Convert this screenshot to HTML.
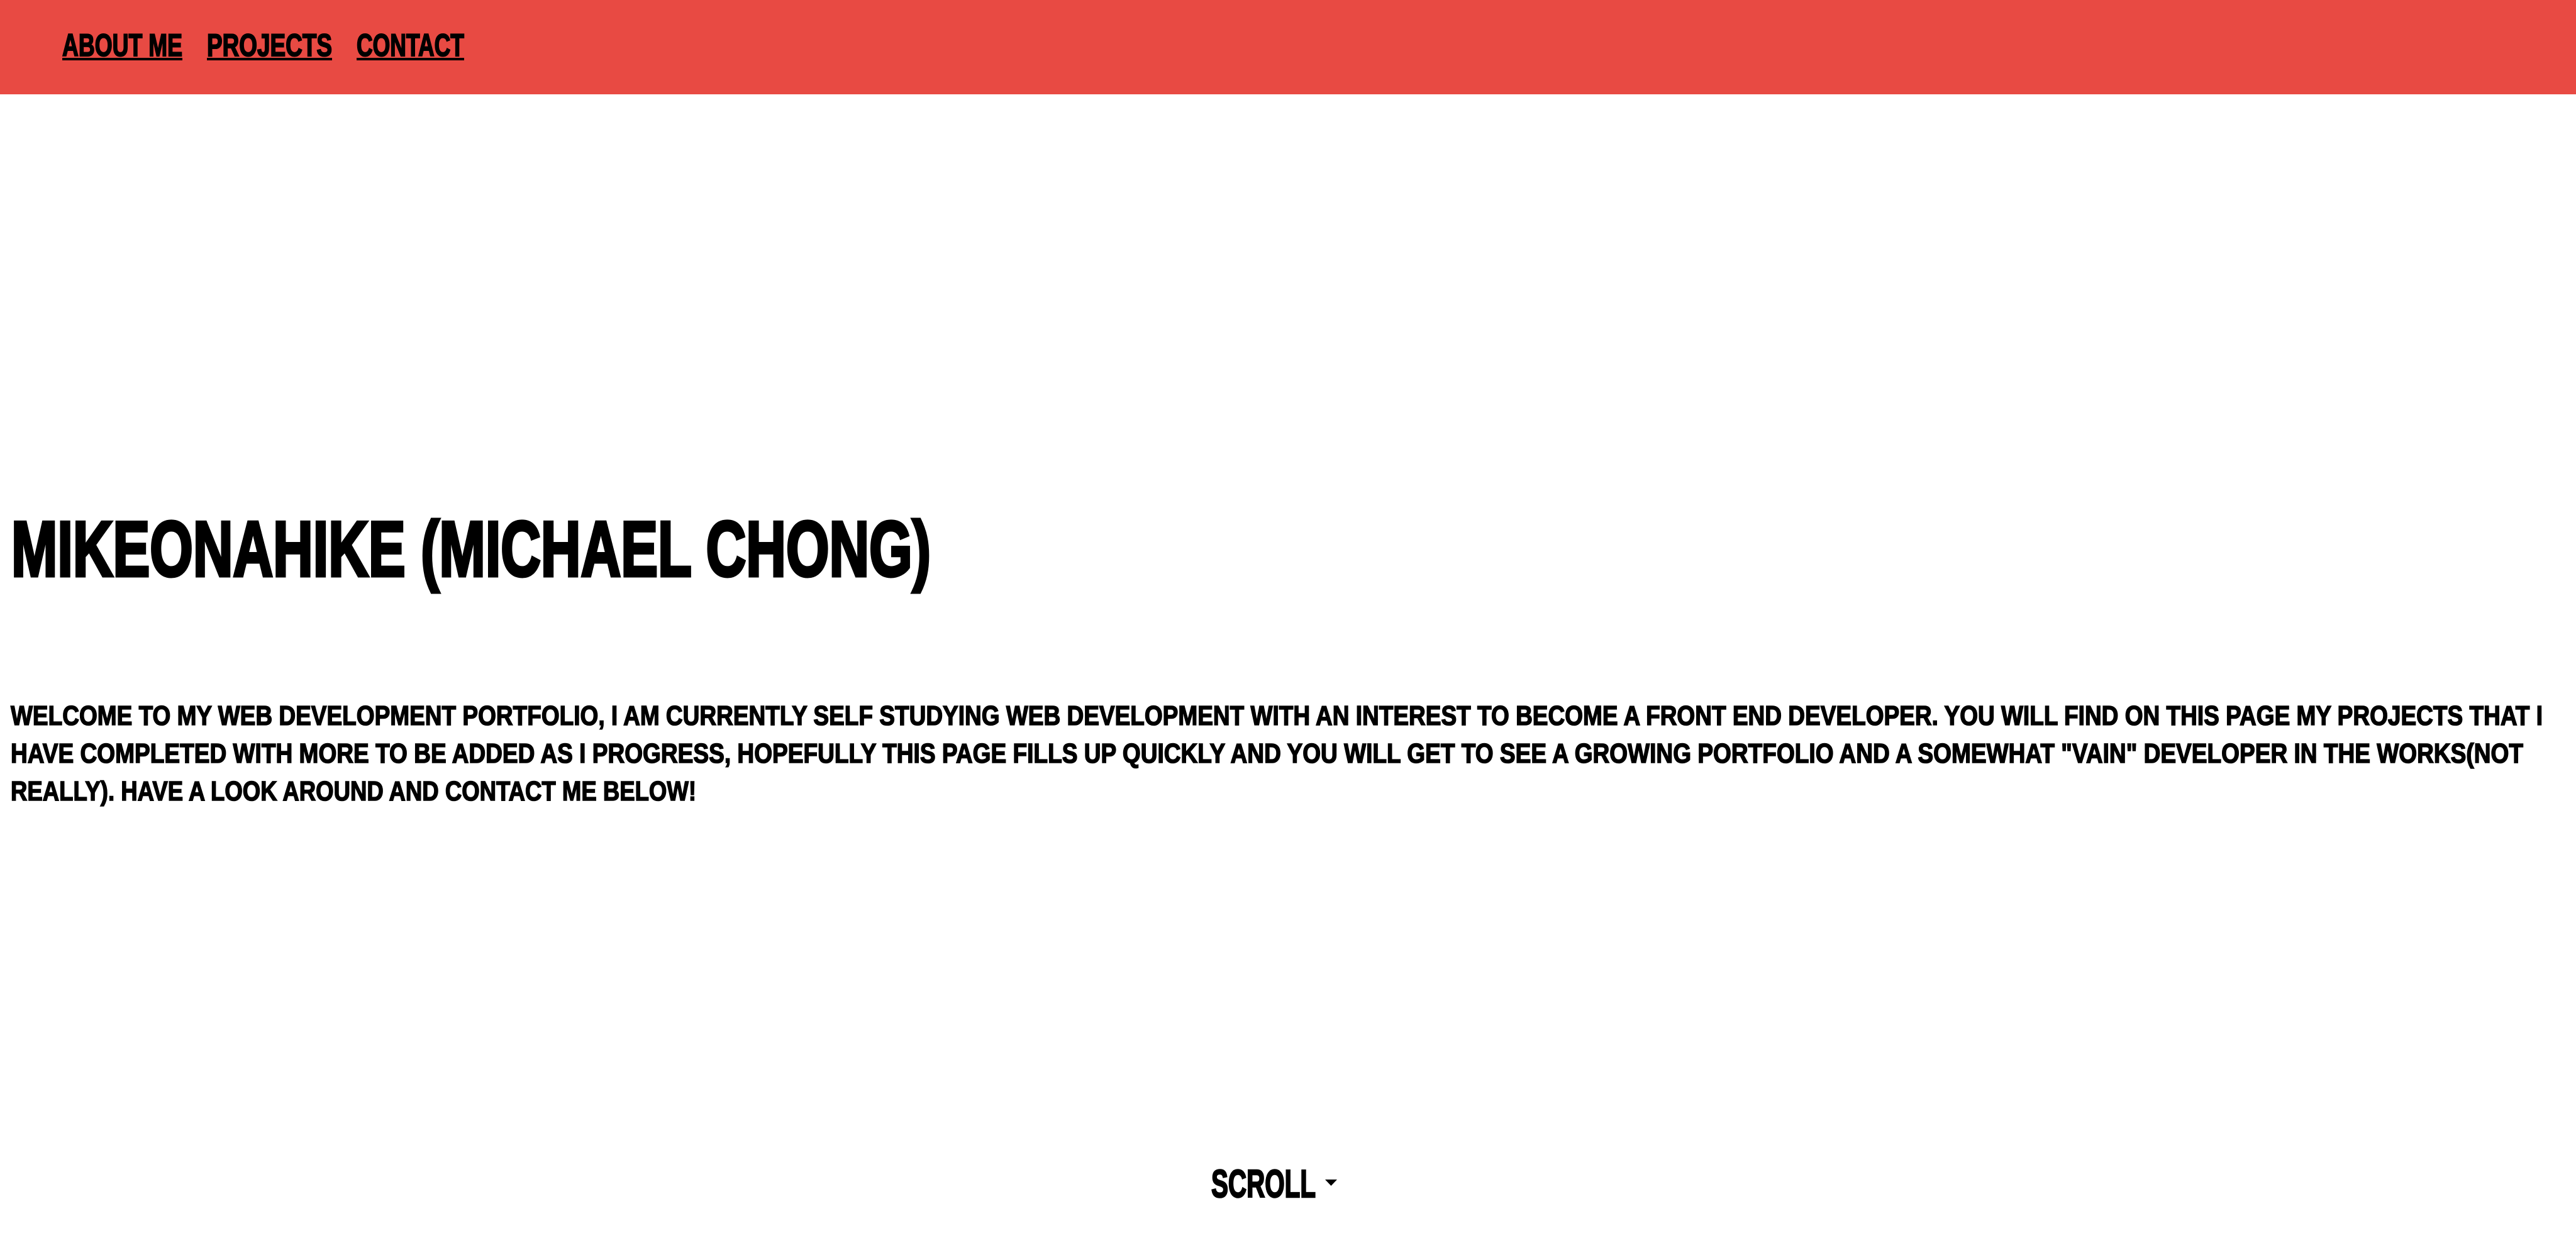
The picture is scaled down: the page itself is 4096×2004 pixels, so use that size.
<!DOCTYPE html>
<html><head><meta charset="utf-8"><style>
html,body{margin:0;padding:0;background:#fff;width:4096px;height:2004px;overflow:hidden}
svg{display:block}
text{font-family:"Liberation Sans Narrow","Liberation Sans",sans-serif;font-weight:bold;fill:#000;stroke:#000}
</style></head><body>
<svg width="4096" height="2004" viewBox="0 0 4096 2004" xmlns="http://www.w3.org/2000/svg">
<rect x="0" y="0" width="4096" height="150" fill="#E84A43"/>
<text x="99" y="89" font-size="50" stroke-width="2" textLength="191" lengthAdjust="spacingAndGlyphs">ABOUT ME</text>
<rect x="99" y="92" width="191" height="4"/>
<text x="329" y="89" font-size="50" stroke-width="2" textLength="199" lengthAdjust="spacingAndGlyphs">PROJECTS</text>
<rect x="329" y="92" width="199" height="4"/>
<text x="567" y="89" font-size="50" stroke-width="2" textLength="171" lengthAdjust="spacingAndGlyphs">CONTACT</text>
<rect x="567" y="92" width="171" height="4"/>
<text x="18" y="916" font-size="124" stroke-width="5" textLength="1462" lengthAdjust="spacingAndGlyphs">MIKEONAHIKE (MICHAEL CHONG)</text>
<text x="17" y="1153" font-size="44" stroke-width="1.6" textLength="4026" lengthAdjust="spacingAndGlyphs">WELCOME TO MY WEB DEVELOPMENT PORTFOLIO, I AM CURRENTLY SELF STUDYING WEB DEVELOPMENT WITH AN INTEREST TO BECOME A FRONT END DEVELOPER. YOU WILL FIND ON THIS PAGE MY PROJECTS THAT I</text>
<text x="17" y="1213" font-size="44" stroke-width="1.6" textLength="3995" lengthAdjust="spacingAndGlyphs">HAVE COMPLETED WITH MORE TO BE ADDED AS I PROGRESS, HOPEFULLY THIS PAGE FILLS UP QUICKLY AND YOU WILL GET TO SEE A GROWING PORTFOLIO AND A SOMEWHAT "VAIN" DEVELOPER IN THE WORKS(NOT</text>
<text x="17" y="1273" font-size="44" stroke-width="1.6" textLength="1090" lengthAdjust="spacingAndGlyphs">REALLY). HAVE A LOOK AROUND AND CONTACT ME BELOW!</text>
<text x="1926" y="1904" font-size="62" stroke-width="2.5" textLength="166" lengthAdjust="spacingAndGlyphs">SCROLL</text>
<polygon points="2107,1876 2126,1876 2116.5,1886" fill="#000"/>
</svg>
</body></html>
